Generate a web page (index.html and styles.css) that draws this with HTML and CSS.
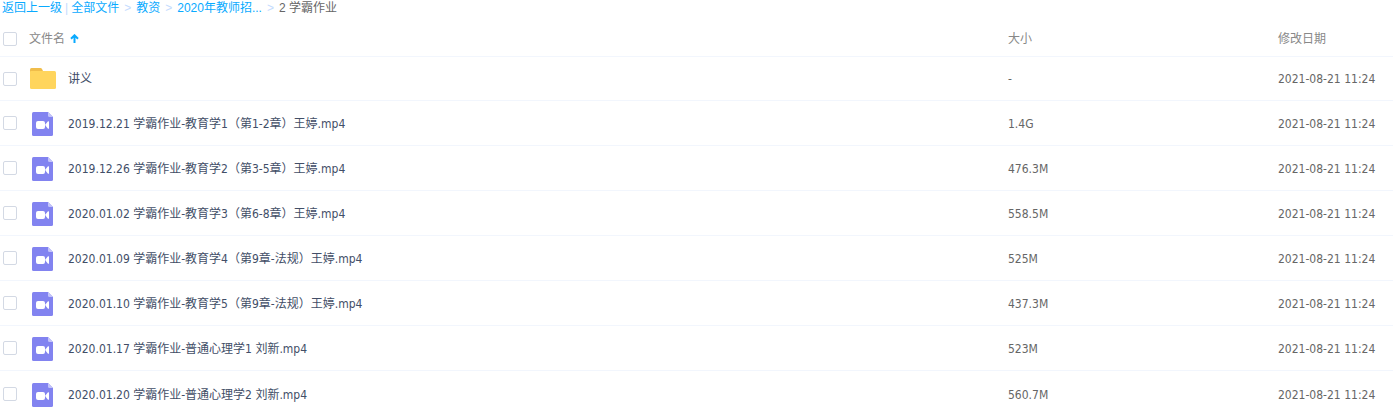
FILE: index.html
```html
<!DOCTYPE html>
<html lang="zh-CN">
<head>
    <meta charset="UTF-8">
    <meta name="viewport" content="width=device-width, initial-scale=1.0">
    <title>2 学霸作业</title>
    <link rel="stylesheet" href="styles.css">
</head>
<body>
    <svg class="symbols" aria-hidden="true">
        <symbol id="icon-folder" viewBox="0 0 26 21">
            <path d="M0 8V1.500Q0 0 1.500 0H10.500Q11.500 0 12 1L13 3V8Z" fill="#f0bd4b"/>
            <path d="M0 4Q0 3 1 3H24.500Q26 3 26 4.500V19.500Q26 21 24.500 21H1.500Q0 21 0 19.500Z" fill="#ffd55d"/>
        </symbol>
        <symbol id="icon-video" viewBox="0 0 21 24">
            <path d="M1.500 0H16L21 5V22.500Q21 24 19.500 24H1.500Q0 24 0 22.500V1.500Q0 0 1.500 0Z" fill="#8283f0"/>
            <path d="M16 0L21 5H17.500Q16 5 16 3.500Z" fill="#c3c4fa"/>
            <rect x="4" y="9" width="9" height="8" rx="2" fill="#fff"/>
            <path d="M13.500 12.300L16 9.300Q17 8.800 17 9.800V16.200Q17 17.200 16 16.700L13.500 13.700Z" fill="#fff"/>
        </symbol>
    </svg>

    <nav class="breadcrumb">
        <a href="#">返回上一级</a>
        <span class="divider">|</span>
        <a href="#">全部文件</a>
        <span class="arrow">&gt;</span>
        <a href="#">教资</a>
        <span class="arrow">&gt;</span>
        <a href="#">2020年教师招...</a>
        <span class="arrow">&gt;</span>
        <span class="current">2 学霸作业</span>
    </nav>

    <table class="file-list">
        <thead>
            <tr>
                <th class="col-check"><input type="checkbox" aria-label="全选"></th>
                <th class="col-name">
                    <div class="sort">
                        <span>文件名</span>
                        <svg class="sort-icon" viewBox="0 0 9 9"><path d="M4.500 9V1.500M1 4.800L4.500 1.300L8 4.800" fill="none" stroke="#09aaff" stroke-width="2"/></svg>
                    </div>
                </th>
                <th class="col-size">大小</th>
                <th class="col-date">修改日期</th>
            </tr>
        </thead>
        <tbody>
            <tr class="folder-row">
                <td><input type="checkbox" aria-label="讲义"></td>
                <td><a class="file" href="#"><svg class="folder"><use href="#icon-folder"/></svg><span>讲义</span></a></td>
                <td>-</td>
                <td>2021-08-21 11:24</td>
            </tr>
            <tr>
                <td><input type="checkbox" aria-label="教育学1"></td>
                <td><a class="file" href="#"><svg class="video"><use href="#icon-video"/></svg><span>2019.12.21 学霸作业-教育学1（第1-2章）王婷.mp4</span></a></td>
                <td>1.4G</td>
                <td>2021-08-21 11:24</td>
            </tr>
            <tr>
                <td><input type="checkbox" aria-label="教育学2"></td>
                <td><a class="file" href="#"><svg class="video"><use href="#icon-video"/></svg><span>2019.12.26 学霸作业-教育学2（第3-5章）王婷.mp4</span></a></td>
                <td>476.3M</td>
                <td>2021-08-21 11:24</td>
            </tr>
            <tr>
                <td><input type="checkbox" aria-label="教育学3"></td>
                <td><a class="file" href="#"><svg class="video"><use href="#icon-video"/></svg><span>2020.01.02 学霸作业-教育学3（第6-8章）王婷.mp4</span></a></td>
                <td>558.5M</td>
                <td>2021-08-21 11:24</td>
            </tr>
            <tr>
                <td><input type="checkbox" aria-label="教育学4"></td>
                <td><a class="file" href="#"><svg class="video"><use href="#icon-video"/></svg><span>2020.01.09 学霸作业-教育学4（第9章-法规）王婷.mp4</span></a></td>
                <td>525M</td>
                <td>2021-08-21 11:24</td>
            </tr>
            <tr>
                <td><input type="checkbox" aria-label="教育学5"></td>
                <td><a class="file" href="#"><svg class="video"><use href="#icon-video"/></svg><span>2020.01.10 学霸作业-教育学5（第9章-法规）王婷.mp4</span></a></td>
                <td>437.3M</td>
                <td>2021-08-21 11:24</td>
            </tr>
            <tr>
                <td><input type="checkbox" aria-label="普通心理学1"></td>
                <td><a class="file" href="#"><svg class="video"><use href="#icon-video"/></svg><span>2020.01.17 学霸作业-普通心理学1 刘新.mp4</span></a></td>
                <td>523M</td>
                <td>2021-08-21 11:24</td>
            </tr>
            <tr>
                <td><input type="checkbox" aria-label="普通心理学2"></td>
                <td><a class="file" href="#"><svg class="video"><use href="#icon-video"/></svg><span>2020.01.20 学霸作业-普通心理学2 刘新.mp4</span></a></td>
                <td>560.7M</td>
                <td>2021-08-21 11:24</td>
            </tr>
        </tbody>
    </table>
</body>
</html>
```

FILE: styles.css
```css
* {
    box-sizing: border-box;
    margin: 0;
    padding: 0;
}

body {
    background-color: #fff;
    font-family: "DejaVu Sans Condensed", "Noto Sans", "Noto Sans CJK SC", sans-serif;
    font-size: 12px;
    line-height: 16px;
    color: #666;
    overflow-x: hidden;
}

a {
    text-decoration: none;
}

.symbols {
    display: none;
}

.breadcrumb {
    display: flex;
    align-items: center;
    height: 16px;
    padding-left: 2px;
    margin-bottom: 3px;
    font-family: "Liberation Sans", "Noto Sans CJK SC", sans-serif;
    white-space: nowrap;
}

.breadcrumb a {
    color: #09aaff;
}

.breadcrumb .divider {
    margin: 0 3px;
    color: #c4dbfe;
}

.breadcrumb .arrow {
    margin: 0 5px;
    color: #c4dbfe;
}

.file-list {
    width: 100%;
    border-collapse: separate;
    border-spacing: 0;
    table-layout: fixed;
}

.col-check {
    width: 29px;
}

.col-size {
    width: 270px;
}

.col-date {
    width: 115px;
}

th {
    height: 38px;
    padding-top: 2px;
    border-bottom: 1px solid #f2f6fd;
    font-weight: 400;
    text-align: left;
    color: #888;
}

td {
    height: 45px;
    padding-top: 2px;
    border-bottom: 1px solid #f2f6fd;
    white-space: nowrap;
}

td:first-child {
    padding-top: 0;
}

.folder-row td {
    height: 44px;
    padding-top: 0;
}

tbody tr:last-child td {
    border-bottom: none;
}

input[type="checkbox"] {
    appearance: none;
    display: block;
    width: 14px;
    height: 14px;
    margin-left: 3px;
    border: 1px solid #d3d9e4;
    border-radius: 2px;
    background-color: #fff;
}

input[type="checkbox"]:checked {
    background-color: #09aaff;
}

.sort {
    display: flex;
    align-items: center;
    gap: 5px;
}

.sort-icon {
    width: 9px;
    height: 9px;
}

.file {
    display: flex;
    align-items: center;
    color: #424e67;
}

.file:hover {
    color: #09aaff;
}

.folder {
    width: 26px;
    height: 21px;
    margin: 0 12px 0 1px;
}

.video {
    width: 21px;
    height: 24px;
    margin: 0 15px 0 3px;
}
```
